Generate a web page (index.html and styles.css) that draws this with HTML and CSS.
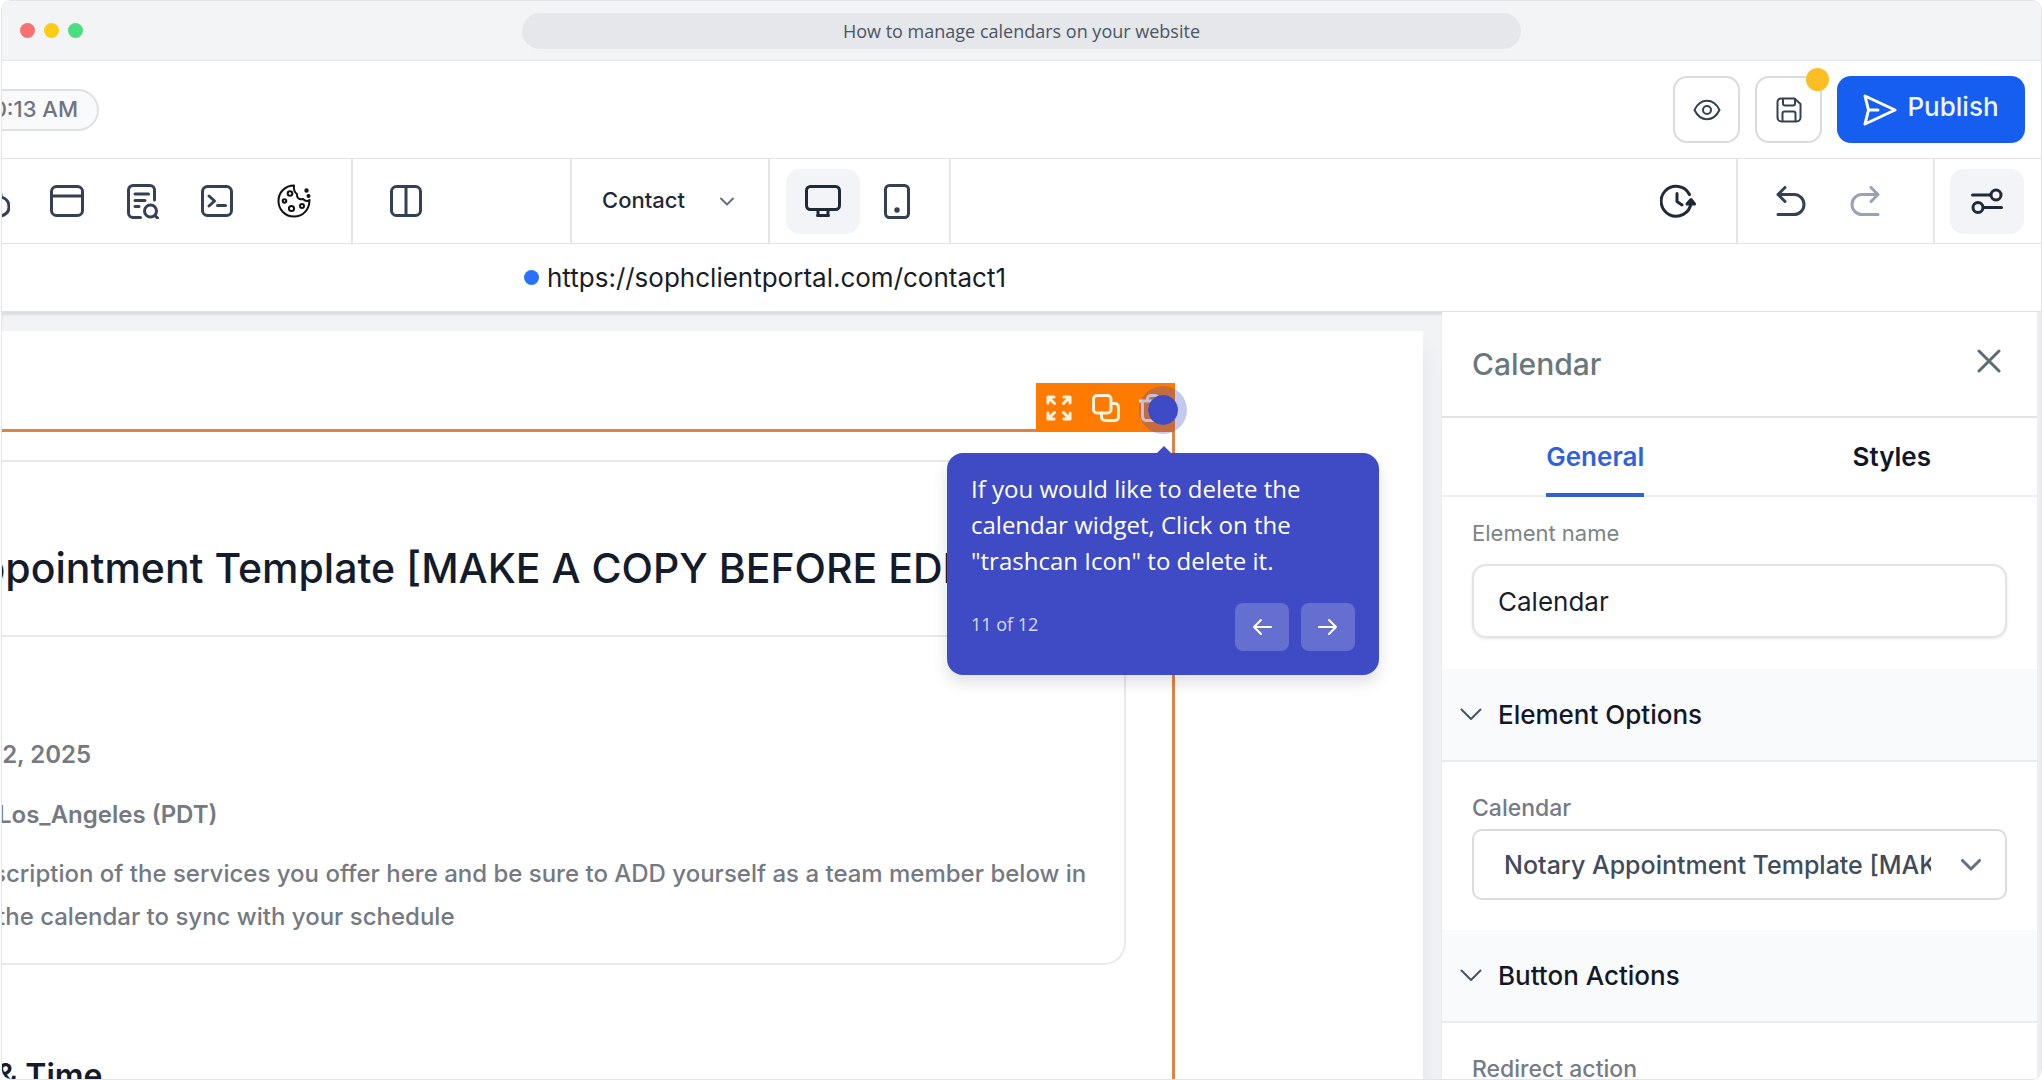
FILE: index.html
```html
<!DOCTYPE html>
<html lang="en">
<head>
<meta charset="utf-8">
<meta name="viewport" content="width=device-width, initial-scale=1">
<title>How to manage calendars on your website</title>
<link rel="stylesheet" href="styles.css">
</head>
<body>
<div class="frame">
  <div class="titlebar">
    <div class="lights"><span class="light red"></span><span class="light yellow"></span><span class="light green"></span></div>
    <div class="address">How to manage calendars on your website</div>
  </div>

  <header class="topbar">
    <div class="saved-time"><span>0:13 AM</span></div>
    <div class="top-actions">
      <button class="square-btn" aria-label="Preview">
        <svg width="28" height="22" viewBox="0 0 28 22" class="line"><path d="M1.500 11C4.500 4.800 8.800 1.800 14 1.800S23.500 4.800 26.500 11C23.500 17.200 19.200 20.200 14 20.200S4.500 17.200 1.500 11Z"/><circle cx="14" cy="11" r="4"/></svg>
      </button>
      <button class="square-btn" aria-label="Save">
        <svg width="26" height="26" viewBox="0 0 26 26" class="line"><path d="M5 1.500H18.500L24.500 7V20.500a4 4 0 0 1-4 4H5.500a4 4 0 0 1-4-4V5A3.500 3.500 0 0 1 5 1.500Z"/><path d="M7 2V6.500A2 2 0 0 0 9 8.500H17A2 2 0 0 0 19 6.500V2M6.500 24V16.500A2 2 0 0 1 8.500 14.500H17.500A2 2 0 0 1 19.500 16.500V24"/></svg>
        <span class="badge"></span>
      </button>
      <button class="publish-btn">
        <svg width="34" height="32" viewBox="0 0 34 32" class="line plane"><path d="M2 2L32 16L2 30L5.500 16ZM5.500 16H15"/></svg>
        <span>Publish</span>
      </button>
    </div>
  </header>

  <nav class="toolbar" aria-label="Builder tools">
    <div class="group group-pages">
      <button class="tool" aria-label="Theme"><svg width="38" height="36" viewBox="0 0 38 36" class="line"><path d="M19 2C22 9 30 6 29 14C34 15 37 19 37 24C37 30 33 34 19 34C9 34 4 30 4 23C4 14 15 9 19 2Z"/></svg></button>
      <button class="tool" aria-label="Header"><svg width="34" height="32" viewBox="0 0 34 32" class="line"><rect x="1.500" y="1.500" width="31" height="29" rx="5"/><path d="M2 11H32"/></svg></button>
      <button class="tool" aria-label="SEO"><svg width="32" height="35" viewBox="0 0 32 35" class="line"><path d="M13.500 33.500H6A4.500 4.500 0 0 1 1.500 29V6A4.500 4.500 0 0 1 6 1.500H23A4.500 4.500 0 0 1 27.500 6V16"/><path d="M8 10H21.500M8 16.500H18M8 22.500H12"/><circle cx="23.500" cy="27" r="6"/><path d="M28 31.500L30.500 34"/></svg></button>
      <button class="tool tool-code" aria-label="Custom code"><svg width="32" height="32" viewBox="0 0 32 32" class="line"><rect x="1.500" y="1.500" width="29" height="29" rx="5"/><path d="M8 11L13.500 16L8 21M16.500 20.500H24.500"/></svg></button>
      <button class="tool tool-cookies" aria-label="Cookies"><svg width="34" height="34" viewBox="0 0 34 34" class="line cookie"><path d="M17 1.500C8 1.500 1.500 8.500 1.500 17S8 32.500 17 32.500S32.500 25.500 32.500 16C30 18 28 17 26 15C22 16 19.500 13.500 20 10C17 8 16.500 5 17 1.500Z"/><circle cx="13" cy="9.500" r="2.300"/><circle cx="7.500" cy="17" r="1.800"/><circle cx="14.500" cy="24.500" r="2.600"/><circle cx="25" cy="22" r="2"/><circle cx="29.500" cy="6.500" r="1.200"/><circle cx="31.500" cy="12" r="1"/></svg></button>
    </div>
    <div class="group group-layout">
      <button class="tool" aria-label="Columns"><svg width="32" height="32" viewBox="0 0 32 32" class="line"><rect x="1.500" y="1.500" width="29" height="29" rx="5"/><path d="M16 2V30"/></svg></button>
    </div>
    <div class="group group-select">
      <select class="page-select" aria-label="Page"><option>Contact</option></select>
      <svg width="14" height="9" viewBox="0 0 14 9" class="line page-chevron"><path d="M1 1.500L7 7.500L13 1.500"/></svg>
    </div>
    <div class="group group-device">
      <button class="tool active" aria-label="Desktop"><svg width="36" height="32" viewBox="0 0 36 32" class="line dark"><rect x="1.500" y="1.500" width="33" height="23" rx="4"/><path d="M13 25V30.500M23 25V30.500M12.500 30.500H23.500"/></svg></button>
      <button class="tool" aria-label="Mobile"><svg width="26" height="35" viewBox="0 0 26 35" class="line"><rect x="1.500" y="1.500" width="23" height="32" rx="4"/><circle cx="13" cy="26" r="1.200" fill="#344054"/></svg></button>
    </div>
    <div class="group group-history">
      <button class="tool" aria-label="Version history"><svg width="36" height="34" viewBox="0 0 36 34" class="line dark"><path d="M29.500 10.500A15 15 0 1 0 31 19M17 9.500V17.500L22 21"/><path d="M27 20L31 15.500L34.500 20Z" fill="#1f2937"/></svg></button>
    </div>
    <div class="group group-undo">
      <button class="tool" aria-label="Undo"><svg width="30" height="30" viewBox="0 0 30 30" class="line"><path d="M9 1.500L2 8.500L9 15.500M2 8.500H18A10 10 0 0 1 18 28.500H2"/></svg></button>
      <button class="tool" aria-label="Redo"><svg width="30" height="30" viewBox="0 0 30 30" class="line muted"><path d="M21 1.500L28 8.500L21 15.500M28 8.500H12A10 10 0 0 0 12 28.500H28"/></svg></button>
    </div>
    <div class="group group-settings">
      <button class="tool active" aria-label="Settings"><svg width="32" height="26" viewBox="0 0 32 26" class="line dark"><path d="M1.500 7H19.500M12.500 19.500H30.500"/><circle cx="25" cy="7" r="5"/><circle cx="7" cy="19.500" r="5"/></svg></button>
    </div>
  </nav>

  <div class="urlbar"><span class="url-dot"></span><a class="url" href="https://sophclientportal.com/contact1">https://sophclientportal.com/contact1</a></div>

  <div class="workspace">
    <main class="stage">
      <div class="sheet">
        <div class="selection">
          <section class="card">
            <h1 class="card-title">ppointment Template [MAKE A COPY BEFORE EDI</h1>
            <div class="card-body">
              <p class="meta date">12, 2025</p>
              <p class="meta zone">Los_Angeles (PDT)</p>
              <p class="description"><span class="line-one">scription of the services you offer here and be sure to ADD yourself as a team member below in</span> <span class="line-two">the calendar to sync with your schedule</span></p>
            </div>
          </section>
          <h2 class="time-title">&amp; Time</h2>

          <div class="element-tools">
            <button class="element-btn" aria-label="Expand"><svg width="26" height="26" viewBox="0 0 26 26" class="line"><path d="M2 8V2H8M2 2L8.500 8.500M18 2H24V8M24 2L17.500 8.500M2 18V24H8M2 24L8.500 17.500M18 24H24V18M24 24L17.500 17.500"/></svg></button>
            <button class="element-btn" aria-label="Clone"><svg width="28" height="28" viewBox="0 0 28 28" class="line"><rect x="1.500" y="1.500" width="17.500" height="17.500" rx="3.500"/><path d="M19 9.500H23A3.500 3.500 0 0 1 26.500 13V23A3.500 3.500 0 0 1 23 26.500H13A3.500 3.500 0 0 1 9.500 23V19"/></svg></button>
            <button class="element-btn" aria-label="Delete"><svg width="28" height="28" viewBox="0 0 28 28" class="line"><path d="M1 7H27M8.500 7V5A3.500 3.500 0 0 1 12 1.500H16A3.500 3.500 0 0 1 19.500 5V7M3.500 7V22.500A4 4 0 0 0 7.500 26.500H20.500A4 4 0 0 0 24.500 22.500V7M11 13V20M17 13V20"/></svg></button>
          </div>
          <span class="hotspot"></span>

          <div class="tip" role="dialog" aria-label="Step 11">
            <p class="tip-text">If you would like to delete the calendar widget, Click on the "trashcan Icon" to delete it.</p>
            <div class="tip-footer">
              <span class="tip-count">11 of 12</span>
              <button class="tip-btn" aria-label="Previous step"><svg width="20" height="18" viewBox="0 0 20 18" class="line"><path d="M19 9H2M9 2L2 9L9 16"/></svg></button>
              <button class="tip-btn" aria-label="Next step"><svg width="20" height="18" viewBox="0 0 20 18" class="line"><path d="M1 9H18M11 2L18 9L11 16"/></svg></button>
            </div>
          </div>
        </div>
      </div>
    </main>

    <aside class="sidebar">
      <div class="side-header">
        <h2 class="side-title">Calendar</h2>
        <button class="close-btn" aria-label="Close"><svg width="24" height="24" viewBox="0 0 24 24" class="line"><path d="M2 2L22 22M22 2L2 22"/></svg></button>
      </div>
      <div class="tabs">
        <button class="tab selected">General</button>
        <button class="tab">Styles</button>
      </div>
      <div class="field">
        <label class="label-name" for="element-name">Element name</label>
        <input class="text-input" id="element-name" type="text" value="Calendar">
      </div>
      <button class="section-bar"><svg width="22" height="13" viewBox="0 0 22 13" class="line"><path d="M1.500 1.500L11 11L20.500 1.500"/></svg><span>Element Options</span></button>
      <div class="field field-option">
        <label class="label-option" for="calendar-select">Calendar</label>
        <div class="select-wrap">
          <select class="calendar-select" id="calendar-select"><option>Notary Appointment Template [MAKE A COPY BEFORE EDITING]</option></select>
          <svg width="20" height="12" viewBox="0 0 20 12" class="line select-chevron"><path d="M1.500 1.500L10 10L18.500 1.500"/></svg>
        </div>
      </div>
      <button class="section-bar"><svg width="22" height="13" viewBox="0 0 22 13" class="line"><path d="M1.500 1.500L11 11L20.500 1.500"/></svg><span>Button Actions</span></button>
      <div class="field field-option">
        <span class="label-option">Redirect action</span>
      </div>
    </aside>
  </div>
</div>
</body>
</html>
```
FILE: styles.css
```css
* { box-sizing: border-box; }

body {
  margin: 0;
  background: #fff;
  color: #101828;
  font-family: Inter, "Liberation Sans", sans-serif;
}

h1, h2, p { margin: 0; }

button, input, select {
  margin: 0;
  padding: 0;
  border: 0;
  background: none;
  color: inherit;
  font: inherit;
}

select { appearance: none; }

svg { display: block; flex: none; }

.line {
  fill: none;
  stroke: #344054;
  stroke-width: 3;
  stroke-linecap: round;
  stroke-linejoin: round;
}
.line.dark { stroke: #1f2937; }
.line.muted { stroke: #98a2b3; }
.line.cookie { stroke: #111; stroke-width: 2; }

.frame {
  display: flex;
  flex-direction: column;
  height: 100vh;
  margin-left: 1px;
  border: 1px solid #e2e4e8;
  border-radius: 10px;
  overflow: hidden;
}

/* Window title bar */
.titlebar {
  display: grid;
  grid-template-columns: 1fr 49% 1fr;
  align-items: center;
  flex: none;
  height: 60px;
  border-bottom: 1px solid #e5e7eb;
  background: #f3f4f6;
}
.lights { display: flex; gap: 9px; padding-left: 18px; }
.light { width: 15px; height: 15px; border-radius: 50%; }
.red { background: #f87171; }
.yellow { background: #facc15; }
.green { background: #4ade80; }
.address {
  height: 36px;
  border-radius: 18px;
  background: #e5e7eb;
  color: #4b5563;
  font: 18px/36px "Open Sans", sans-serif;
  text-align: center;
}

/* Publish row */
.topbar {
  display: flex;
  align-items: center;
  justify-content: space-between;
  flex: none;
  height: 98px;
  padding-right: 16px;
  border-bottom: 1px solid #e2e3e6;
}
.saved-time {
  display: flex;
  align-items: center;
  justify-content: flex-end;
  width: 97px;
  height: 42px;
  padding: 0 19px 2px 0;
  border: 2px solid #dfe0e3;
  border-left: 0;
  border-radius: 0 21px 21px 0;
  background: #f9fafb;
  color: #6f7480;
  font-size: 22px;
  font-weight: 500;
  white-space: nowrap;
}
.top-actions { display: flex; gap: 15px; }
.square-btn {
  position: relative;
  display: flex;
  align-items: center;
  justify-content: center;
  width: 67px;
  height: 67px;
  border: 2px solid #d9dbe0;
  border-radius: 14px;
}
.badge {
  position: absolute;
  top: -10px;
  right: -9px;
  width: 23px;
  height: 23px;
  border-radius: 50%;
  background: #fbbf24;
}
.square-btn .line { stroke-width: 2; }
.publish-btn {
  display: flex;
  align-items: center;
  justify-content: center;
  gap: 10px;
  width: 188px;
  height: 67px;
  border-radius: 14px;
  background: #155eef;
  color: #f0f5ff;
  font-size: 26px;
  font-weight: 500;
}
.publish-btn span { padding-bottom: 6px; }
.plane { stroke: #fff; }

/* Tool row */
.toolbar {
  display: flex;
  flex: none;
  height: 85px;
  border-bottom: 1px solid #e2e3e6;
}
.group {
  display: flex;
  align-items: center;
  flex: none;
  padding: 0 16px;
  border-right: 2px solid #e4e5e8;
}
.tool {
  display: flex;
  align-items: center;
  justify-content: center;
  flex: none;
  width: 74px;
  height: 65px;
  border-radius: 14px;
}
.tool.active { background: #f2f4f7; }
.group-pages { justify-content: flex-end; width: 351px; padding-right: 16px; }
.group-pages .tool { width: 76px; }
.group-pages .tool-code { width: 72px; }
.group-pages .tool-cookies { width: 82px; }
.group-layout { width: 219px; }
.group-select { position: relative; padding: 0; width: 198px; }
.page-select {
  width: 100%;
  height: 64px;
  padding: 0 0 2px 30px;
  color: #1f2937;
  font-size: 22px;
  font-weight: 500;
}
.page-chevron {
  position: absolute;
  right: 34px;
  stroke: #667085;
  stroke-width: 2;
  pointer-events: none;
}
.group-device { width: 181px; }
.group-history { flex: 1; justify-content: flex-end; padding-right: 21px; }
.group-undo { width: 197px; }
.group-settings { border-right: 0; padding-right: 17px; padding-left: 15px; }

.urlbar {
  display: flex;
  align-items: center;
  gap: 8px;
  flex: none;
  height: 68px;
  padding-left: 522px;
  border-bottom: 1px solid #e0e1e3;
}
.url-dot { width: 15px; height: 15px; border-radius: 50%; background: #2970ff; }
.url { color: #1a1d26; font-size: 26px; text-decoration: none; }

/* Page canvas */
.workspace { display: flex; flex: 1; min-height: 0; }
.stage {
  flex: 1;
  min-width: 0;
  padding: 19px 19px 0 0;
  background: #f2f3f5;
  box-shadow: inset 0 3px 2px #dcdde0;
  overflow: hidden;
}
.sheet {
  height: 100%;
  padding: 98px 248px 0 0;
  background: #fff;
  box-shadow: 0 20px 20px #dfe1e5;
}
.selection {
  position: relative;
  height: 100%;
  padding: 28px 46px 0 0;
  border-top: 3px solid #e08347;
  border-right: 3px solid #e08347;
}
.card {
  border: 2px solid #e8e9eb;
  border-left: 0;
  border-radius: 0 22px 22px 0;
}
.card-title {
  padding: 81px 0 42px;
  margin-left: -22px;
  border-bottom: 2px solid #e8e9eb;
  color: #141b2b;
  font-size: 41px;
  font-weight: 500;
  line-height: 50px;
  white-space: nowrap;
}
.card-body {
  padding: 103px 0 25px;
  color: #757982;
  font-size: 24px;
  font-weight: 500;
  white-space: nowrap;
}
.meta { font-weight: 600; line-height: 30px; }
.date { margin-left: -10px; }
.zone { margin: 30px 0 22px -4px; }
.description { line-height: 43px; }
.line-one, .line-two { display: block; }
.line-one { margin-left: -9px; }
.line-two { margin-left: -5px; }
.time-title {
  margin: 91px 0 0 -6px;
  color: #141b2b;
  font-size: 32px;
  font-weight: 600;
  line-height: 40px;
}

.element-tools {
  position: absolute;
  top: -49px;
  right: -3px;
  display: flex;
  align-items: center;
  justify-content: space-between;
  width: 139px;
  height: 49px;
  padding: 0 8px 0 10px;
  background: #ff7a00;
}
.element-btn .line { stroke: #fff3e0; }
.hotspot {
  position: absolute;
  top: -46px;
  right: -15px;
  width: 48px;
  height: 48px;
  border: 9px solid rgba(61, 75, 199, 0.3);
  border-radius: 50%;
  background: #3e4bc7;
  background-clip: padding-box;
}

.tip {
  position: absolute;
  top: 21px;
  right: -207px;
  width: 432px;
  padding: 24px;
  border-radius: 16px;
  background: #3e4bc5;
  box-shadow: 0 8px 16px rgba(0, 0, 0, 0.12);
  color: #fff;
  font-family: "Open Sans", sans-serif;
}
.tip::before {
  content: "";
  position: absolute;
  top: -7px;
  right: 208px;
  border: 7px solid transparent;
  border-top: 0;
  border-bottom-color: #3e4bc5;
}
.tip-text { margin: -6px 0 24px; font-size: 24px; line-height: 36px; }
.tip-footer { display: flex; align-items: center; gap: 12px; }
.tip-count { flex: 1; padding-bottom: 6px; color: #d8dbf3; font-size: 18px; }
.tip-btn {
  display: flex;
  align-items: center;
  justify-content: center;
  width: 54px;
  height: 48px;
  border-radius: 8px;
  background: rgba(255, 255, 255, 0.2);
}
.tip-btn .line { stroke: #fff; stroke-width: 2; }

/* Element settings */
.sidebar {
  flex: none;
  width: 599px;
  border-right: 4px solid #eceef0;
  background: #fff;
}
.side-header {
  display: flex;
  align-items: flex-start;
  justify-content: space-between;
  padding: 34px 36px 34px 30px;
  border-bottom: 2px solid #e2e3e6;
}
.side-title { color: #6a777c; font-size: 30px; font-weight: 500; line-height: 36px; }
.close-btn { height: 30px; }
.close-btn .line { stroke: #5d6b73; }
.tabs {
  display: grid;
  grid-template-columns: 1fr 1fr;
  justify-items: center;
  gap: 6px;
  padding-left: 8px;
  border-bottom: 2px solid #eceef0;
}
.tab {
  margin-bottom: -2px;
  padding: 23px 0 20px;
  border-bottom: 4px solid transparent;
  font-size: 26px;
  font-weight: 600;
  line-height: 32px;
}
.tab.selected { border-color: #2f62cc; color: #2f62d9; }
.field { display: flex; flex-direction: column; padding: 22px 30px 31px; }
.field-option { padding: 32px 30px 30px; }
.label-name { margin-bottom: 17px; color: #7b8586; font-size: 22px; line-height: 28px; }
.label-option { margin-bottom: 7px; color: #757b87; font-size: 23px; font-weight: 500; line-height: 28px; }
.text-input {
  height: 74px;
  padding: 0 24px;
  border: 2px solid #e2e3e6;
  border-radius: 14px;
  box-shadow: 0 1px 3px rgba(16, 24, 40, 0.1);
  color: #1a1d2b;
  font-size: 26px;
}
.section-bar {
  display: flex;
  align-items: center;
  gap: 16px;
  width: 100%;
  height: 93px;
  padding-left: 18px;
  border-bottom: 2px solid #e9ebed;
  background: #f9fafc;
  color: #141826;
  font-size: 26px;
  font-weight: 500;
}
.section-bar .line { stroke: #475467; stroke-width: 2; }
.select-wrap { position: relative; display: flex; align-items: center; }
.calendar-select {
  width: 100%;
  height: 71px;
  padding: 0 74px 0 30px;
  border: 2px solid #d9dbdf;
  border-radius: 10px;
  color: #414b5b;
  font-size: 25px;
  font-weight: 500;
}
.select-chevron {
  position: absolute;
  right: 26px;
  stroke: #667085;
  pointer-events: none;
}
```
